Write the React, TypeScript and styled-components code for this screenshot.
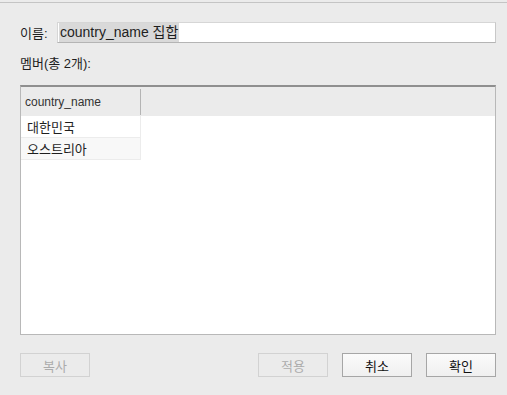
import React from 'react';
import styled, { createGlobalStyle } from 'styled-components';

const GlobalStyle = createGlobalStyle`
    html, body {
        margin: 0;
        padding: 0;
        background: #ebebeb;
    }
    body {
        font-family: "Liberation Sans", "Noto Sans CJK KR", sans-serif;
        color: #1e1e1e;
    }
`

const Dialog = styled.div`
    width: 507px;
    height: 393px;
    box-sizing: border-box;
    border-top: 1px solid #c4c4c4;
    margin-top: 2px;
    padding: 19px 11px 0 20px;
    display: flex;
    flex-direction: column;
    background: #ebebeb;
`

const NameRow = styled.div`
    display: flex;
    align-items: center;
    height: 21px;
`

const Label = styled.div`
    font-size: 13px;
    width: 37px;
`

const NameInput = styled.div`
    flex: 1;
    height: 21px;
    box-sizing: border-box;
    background: #fff;
    border: 1px solid #d6d6d6;
    border-bottom-color: #b4b4b4;
    border-right-color: #c8c8c8;
    display: flex;
    align-items: center;
    padding-left: 1px;
`

const Selected = styled.span`
    background: #d9d9d9;
    font-size: 14px;
    padding: 1px;
    line-height: 17px;
`

const MembersLabel = styled.div`
    font-size: 13px;
    margin-top: 12px;
    height: 18px;
    line-height: 18px;
`

const Table = styled.div`
    margin-top: 12px;
    height: 250px;
    box-sizing: border-box;
    border: 1px solid #b8b8b8;
    border-top: 2px solid #8f8f8f;
    background: #fff;
`

const HeaderRow = styled.div`
    height: 29px;
    background: #ebebeb;
    display: flex;
    align-items: center;
`

const HeaderCell = styled.div`
    width: 120px;
    height: 26px;
    border-right: 1px solid #b4b4b4;
    font-size: 12px;
    color: #333;
    display: flex;
    align-items: center;
    padding-left: 4px;
    box-sizing: border-box;
`

const Row = styled.div<{ $alt?: boolean }>`
    width: 120px;
    height: 22px;
    box-sizing: border-box;
    border-right: 1px solid #ececec;
    border-bottom: 1px solid #ececec;
    background: ${p => (p.$alt ? '#f8f8f8' : '#fff')};
    font-size: 13px;
    display: flex;
    align-items: center;
    padding-left: 6px;
`

const Footer = styled.div`
    display: flex;
    margin-top: 18px;
    height: 24px;
`

const Spacer = styled.div`
    flex: 1;
`

const Button = styled.div<{ $disabled?: boolean; $gap?: number }>`
    width: 70px;
    height: 24px;
    box-sizing: border-box;
    margin-left: ${p => p.$gap ?? 0}px;
    border: 1px solid ${p => (p.$disabled ? '#d2d2d2' : '#a6a6a6')};
    background: ${p => (p.$disabled ? '#ebebeb' : 'linear-gradient(#fbfbfb, #f0f0f0)')};
    color: ${p => (p.$disabled ? '#ababab' : '#111')};
    font-size: 13px;
    display: flex;
    align-items: center;
    justify-content: center;
`

const App = () => {
    const members = ['대한민국', '오스트리아'];
    return (
        <>
            <GlobalStyle />
            <Dialog>
                <NameRow>
                    <Label>이름:</Label>
                    <NameInput>
                        <Selected>country_name 집합</Selected>
                    </NameInput>
                </NameRow>
                <MembersLabel>멤버(총 2개):</MembersLabel>
                <Table>
                    <HeaderRow>
                        <HeaderCell>country_name</HeaderCell>
                    </HeaderRow>
                    {members.map((m, i) => (
                        <Row key={m} $alt={i % 2 === 1}>{m}</Row>
                    ))}
                </Table>
                <Footer>
                    <Button $disabled>복사</Button>
                    <Spacer />
                    <Button $disabled>적용</Button>
                    <Button $gap={14}>취소</Button>
                    <Button $gap={14}>확인</Button>
                </Footer>
            </Dialog>
        </>
    );
}

export default App;
